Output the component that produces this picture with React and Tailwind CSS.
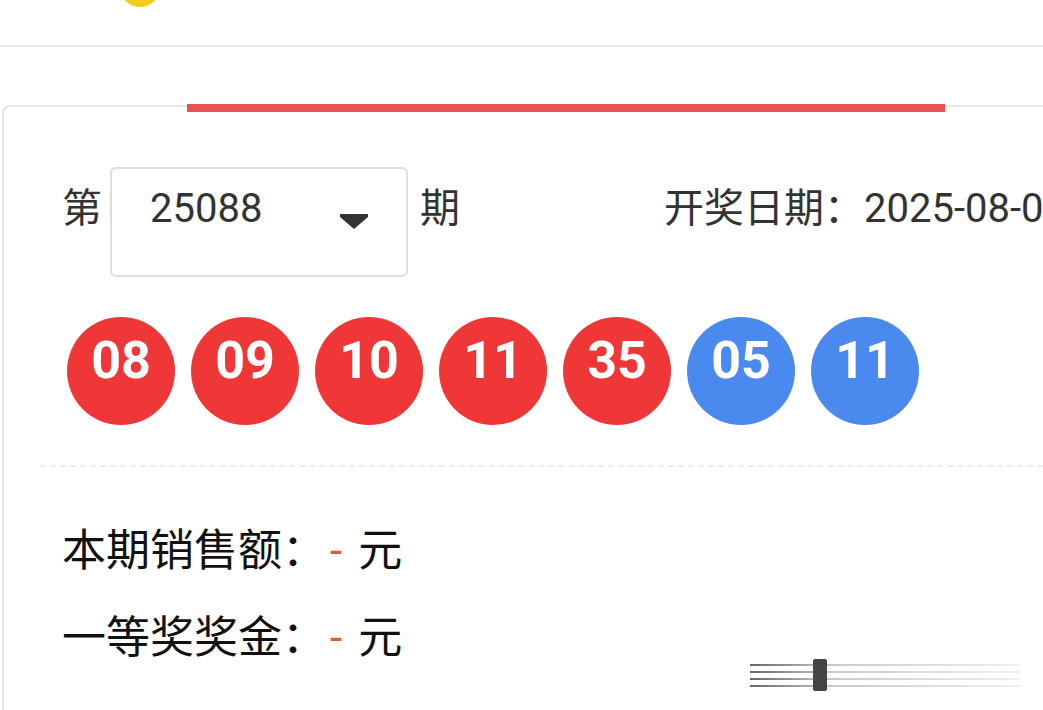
const font = { fontFamily: 'Roboto, "Noto Sans CJK SC", sans-serif' };

const balls = [
  { n: '08', c: 'red' },
  { n: '09', c: 'red' },
  { n: '10', c: 'red' },
  { n: '11', c: 'red' },
  { n: '35', c: 'red' },
  { n: '05', c: 'blue' },
  { n: '11', c: 'blue' },
];

function Ball({ n, c }) {
  return (
    <div
      className={`shrink-0 w-[108px] h-[108px] rounded-full flex justify-center pt-[16px] text-white font-bold text-[52px] leading-[56px] ${
        c === 'red' ? 'bg-[#ef3737]' : 'bg-[#4a89ee]'
      }`}
    >
      {n}
    </div>
  );
}

function Watermark() {
  return (
    <svg className="absolute right-[18px] bottom-[18px]" width="275" height="36" viewBox="0 0 275 36">
      <defs>
        <linearGradient id="wm" x1="0" x2="1">
          <stop offset="0" stopColor="#666" />
          <stop offset="0.3" stopColor="#c8c8c8" />
          <stop offset="1" stopColor="#f0f0f0" />
        </linearGradient>
      </defs>
      {[8, 15, 22, 29].map(y => (
        <rect key={y} x="0" y={y} width="270" height="2" fill="url(#wm)" />
      ))}
      <rect x="63" y="3" width="14" height="32" rx="2" fill="#444" />
    </svg>
  );
}

export default function App() {
  return (
    <div className="relative w-[1043px] h-[710px] overflow-hidden bg-white" style={font}>
      {/* header */}
      <div className="flex h-[47px] border-b-2 border-[#ebebeb]">
        <div className="ml-[120px] -mt-[33px] w-[40px] h-[40px] rounded-full bg-[#f7cb1c]" />
      </div>

      {/* card */}
      <div className="flex flex-col mt-[58px] ml-[2px] h-[700px] border-2 border-r-0 border-[#e6e6e6] rounded-tl-[8px]">
        <div className="-mt-[3px] ml-[183px] w-[758px] h-[8px] bg-[#e85252]" />

        <div className="pl-[36px]">
          {/* period row */}
          <div className="mt-[55px] pl-[22px] flex items-start text-[40px] leading-[40px] text-[#333] whitespace-nowrap">
            <span className="shrink-0 mt-[22px]">第</span>
            <div className="shrink-0 ml-[8px] w-[298px] h-[110px] border-2 border-[#dedede] rounded-[6px] flex items-start pl-[38px] pr-[38px] pt-[20px]">
              <span className="flex-1">25088</span>
              <svg className="mt-[25px]" width="28" height="15" viewBox="0 0 28 15">
                <path d="M0 0 L28 0 L28 3 L14 15 L0 3 Z" fill="#333" />
              </svg>
            </div>
            <span className="shrink-0 ml-[12px] mt-[22px]">期</span>
            <span className="shrink-0 ml-[204px] mt-[22px]">开奖日期：2025-08-05</span>
          </div>

          {/* balls */}
          <div className="mt-[40px] pl-[27px] flex gap-[16px]">
            {balls.map((b, i) => (
              <Ball key={i} {...b} />
            ))}
          </div>

          <div className="mt-[40px] border-t-2 border-dashed border-[#ececec]" />

          {/* info */}
          <div className="pl-[22px] pt-[62px] text-[44px] leading-[44px] text-[#111] flex flex-col gap-[43px] whitespace-nowrap">
            <div className="flex items-center">
              本期销售额：<span className="text-[#e2583e] pl-[4px] pr-[16px]">-</span>元
            </div>
            <div className="flex items-center">
              一等奖奖金：<span className="text-[#e2583e] pl-[4px] pr-[16px]">-</span>元
            </div>
          </div>
        </div>
      </div>

      <Watermark />
    </div>
  );
}
